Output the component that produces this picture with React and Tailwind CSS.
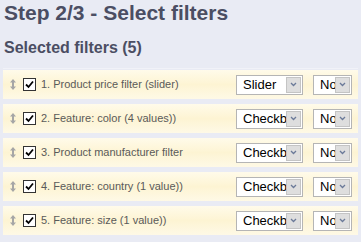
import React from 'react';

const filters = [
  { label: '1. Product price filter (slider)', type: 'Slider' },
  { label: '2. Feature: color (4 values))', type: 'Checkb' },
  { label: '3. Product manufacturer filter', type: 'Checkb' },
  { label: '4. Feature: country (1 value))', type: 'Checkb' },
  { label: '5. Feature: size (1 value))', type: 'Checkb' },
];

function FakeSelect({ value, width }) {
  return (
    <div className={`flex h-[20px] ${width} items-stretch border border-[#b5b5b5] bg-white`}>
      <div className="flex-1 overflow-hidden whitespace-nowrap pl-[6px] text-[13px] leading-[18px] text-black">{value}</div>
      <div className="my-[1px] mr-[1px] flex w-[15px] items-center justify-center border border-[#c4c4c4] bg-[#dedede]">
        <svg width="7" height="5" viewBox="0 0 7 5">
          <path d="M1 1 L3.5 3.5 L6 1" fill="none" stroke="#6b7a99" strokeWidth="1.3" />
        </svg>
      </div>
    </div>
  );
}

function FilterRow({ label, type }) {
  return (
    <div className="flex h-[29px] items-center bg-gradient-to-b from-[#fffbea] via-[#fdf4d3] to-[#fef9e6] pl-[7px] pr-[6px]">
      <svg width="6" height="11" viewBox="0 0 6 11" className="mr-[7px]">
        <path d="M3 0 L6 3.5 L0 3.5 Z M3 11 L6 7.5 L0 7.5 Z" fill="#a6a6a6" />
        <rect x="2" y="3" width="2" height="5" fill="#a6a6a6" />
      </svg>
      <div className="mr-[5px] flex h-[13px] w-[13px] items-center justify-center border border-[#333] bg-white">
        <svg width="9" height="9" viewBox="0 0 9 9">
          <path d="M1 4.5 L3.5 7 L8 1.5" fill="none" stroke="#000" strokeWidth="1.8" />
        </svg>
      </div>
      <span className="flex-1 text-[11px] text-[#5a5a5a]">{label}</span>
      <FakeSelect value={type} width="w-[67px]" />
      <div className="w-[10px]" />
      <FakeSelect value="No" width="w-[39px]" />
    </div>
  );
}

export default function App() {
  return (
    <div className="h-[242px] w-[361px] overflow-hidden bg-[#e9ebf4] font-['Liberation_Sans',Arial,sans-serif]">
      <h1 className="pl-[4px] pt-[1px] text-[21px] font-bold leading-[24px] text-[#4b4e63]">Step 2/3 - Select filters</h1>
      <h2 className="mt-[13px] pl-[4px] text-[16px] font-bold leading-[19px] text-[#4b4e63]">Selected filters (5)</h2>
      <div className="mx-[3px] mt-[11px] flex flex-col gap-[5px] border-t border-[#f1f2f8] pt-[1px]">
        {filters.map((f) => (
          <FilterRow key={f.label} label={f.label} type={f.type} />
        ))}
      </div>
    </div>
  );
}
